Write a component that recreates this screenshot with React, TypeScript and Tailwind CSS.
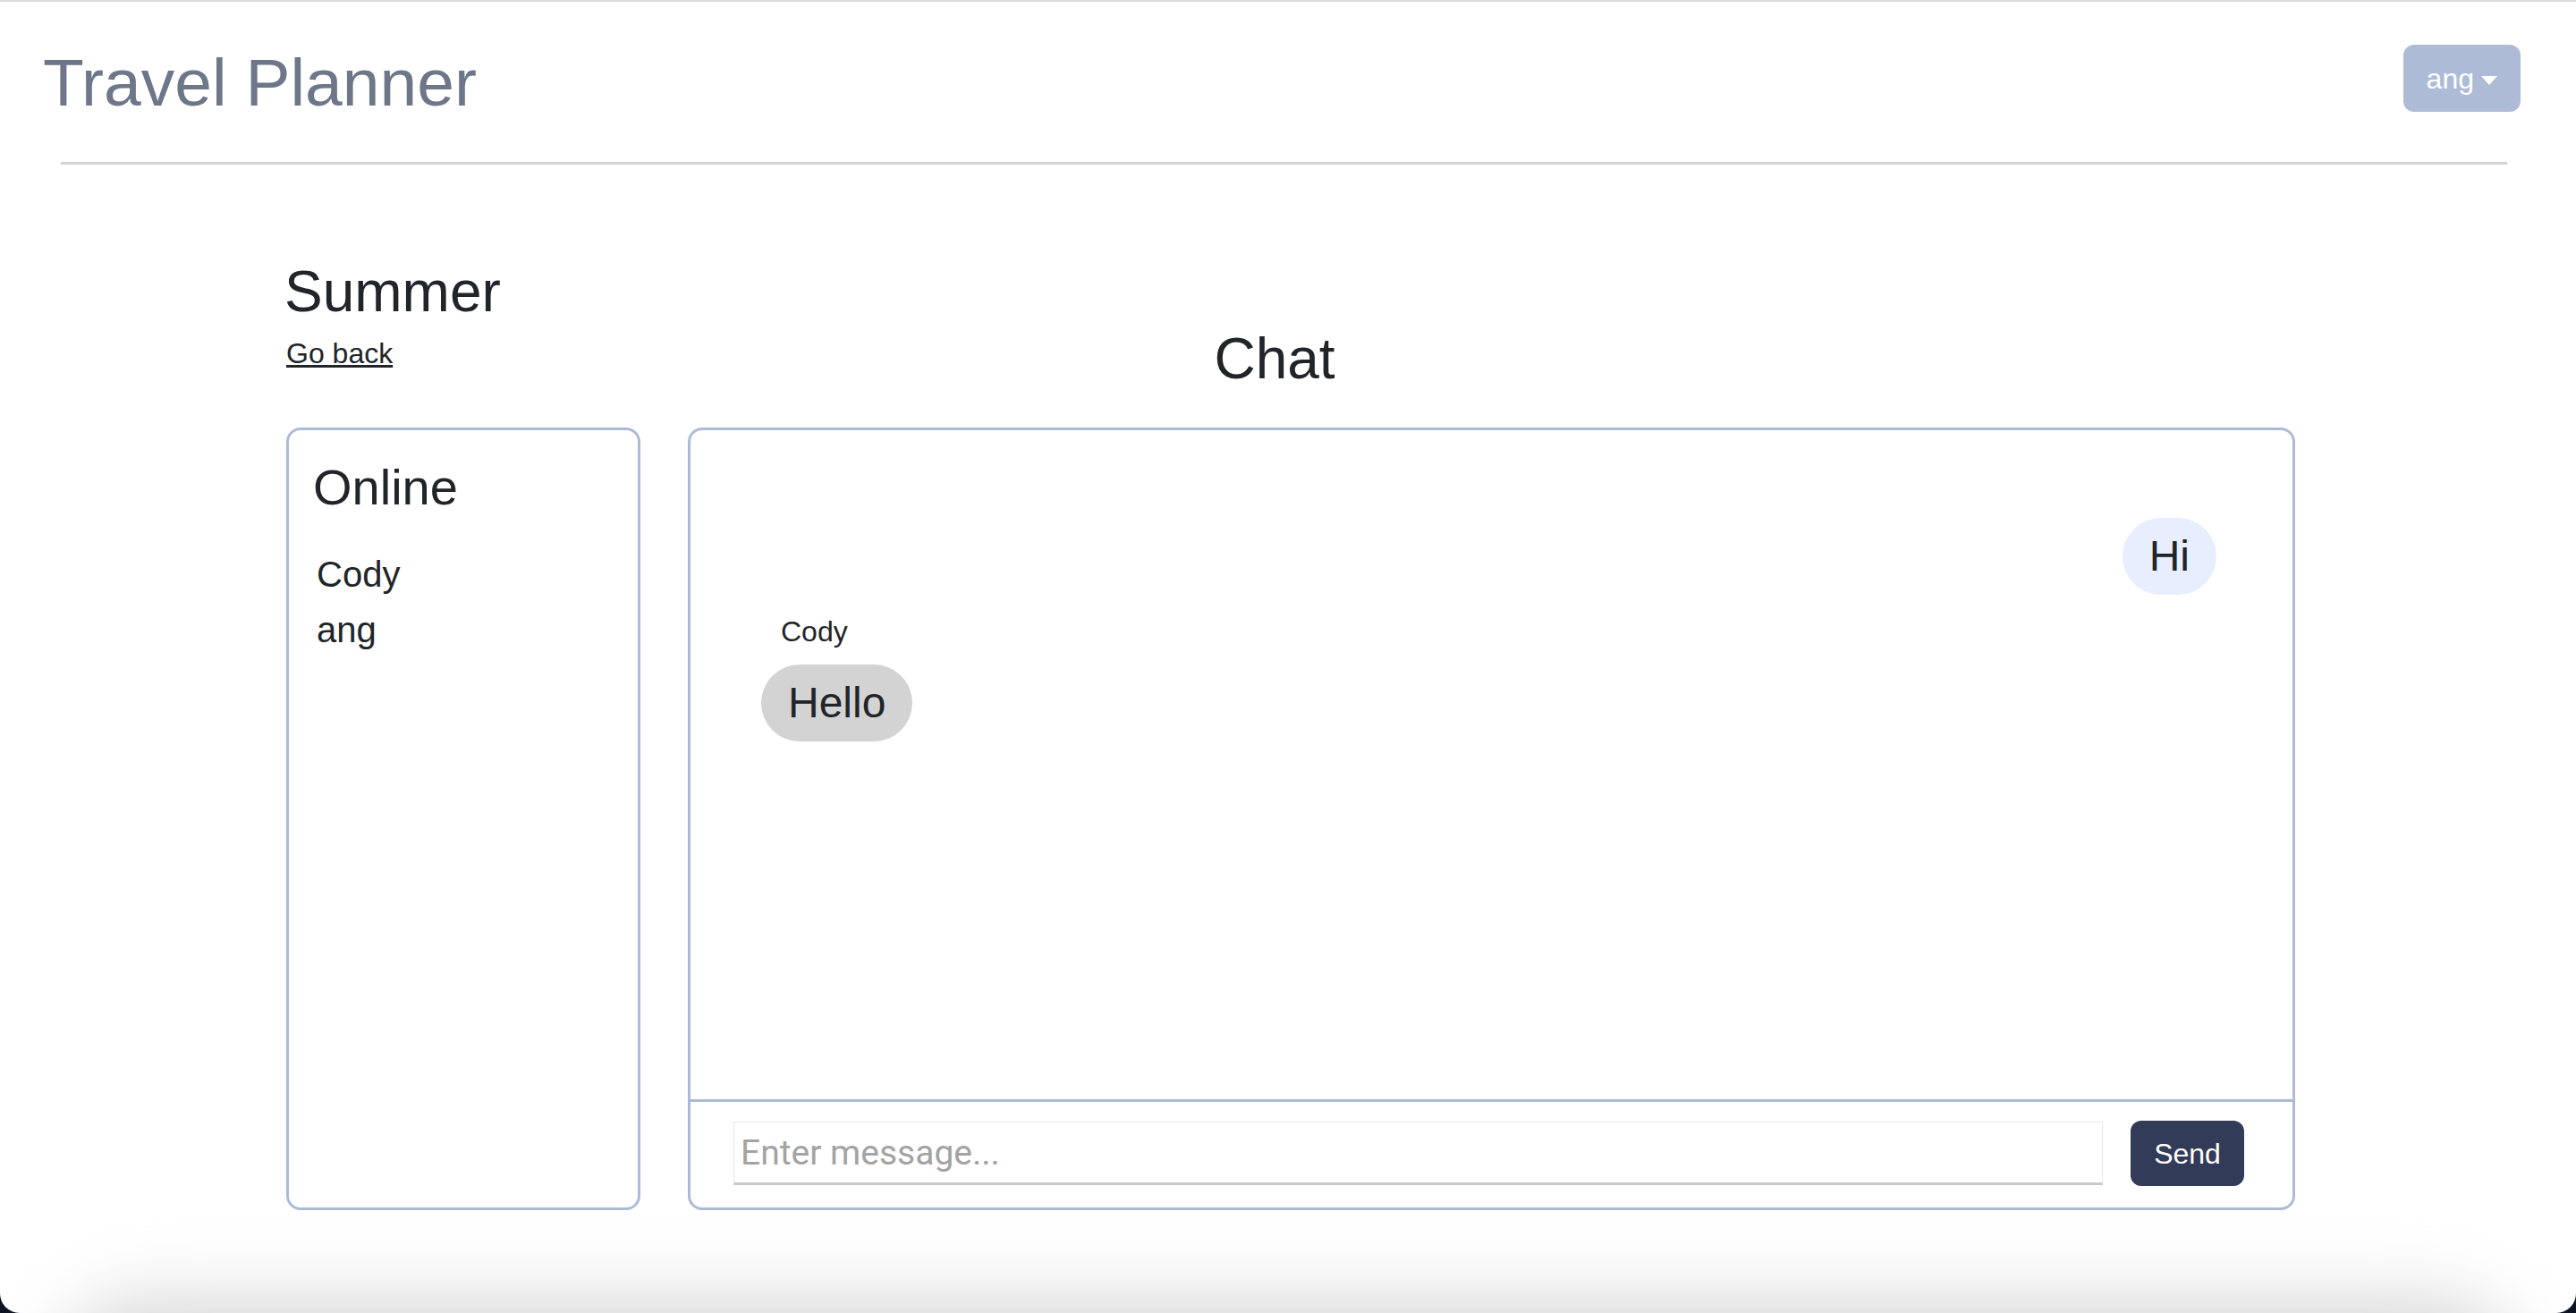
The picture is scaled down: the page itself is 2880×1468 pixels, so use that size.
import { useState } from 'react';

interface Message {
  id:     number;
  author: string;
  text:   string;
  mine:   boolean;
}

const online = ['Cody', 'ang'];

const messages: Message[] = [
  { id: 1, author: 'ang',  text: 'Hi',    mine: true  },
  { id: 2, author: 'Cody', text: 'Hello', mine: false },
];

function Navbar() {
  return (
    <div className="flex items-start justify-between pt-[48px] pl-[48px] pr-[62px]">
      <h1 className="-mt-[3px] mb-[5px] text-[75px] leading-[90px] text-[#6e7689]">Travel Planner</h1>
      <button className="flex h-[75px] items-center gap-[8px] rounded-[12px] bg-[#aebbd7] px-[26px] text-[32px] text-white">
        ang
        <span className="mt-[4px] h-0 w-0 border-x-[9px] border-t-[10px] border-x-transparent border-t-white" />
      </button>
    </div>
  );
}

function OnlineCard() {
  return (
    <div className="w-[396px] rounded-[16px] border-[3px] border-[#adbad7] pt-[30px] pl-[27px]">
      <h3 className="text-[56px] leading-[67px] text-[#212529]">Online</h3>
      <ul className="mt-[33px] pl-[4px]">
        {online.map(name => (
          <li key={name} className="text-[40px] leading-[62px] text-[#212529]">{name}</li>
        ))}
      </ul>
    </div>
  );
}

function ChatCard() {
  const [draft, setDraft] = useState('');

  return (
    <div className="flex flex-1 flex-col rounded-[16px] border-[3px] border-[#adbad7]">

      {/* Messages */}
      <div className="flex-1 pt-[98px]">
        {messages.map(m =>
          m.mine ? (
            <div key={m.id} className="flex justify-end pr-[85px]">
              <span className="rounded-[43px] bg-[#e8eefd] px-[30px] py-[7px] text-[48px] leading-[72px] text-[#212529]">
                {m.text}
              </span>
            </div>
          ) : (
            <div key={m.id} className="mt-[17px] pl-[79px]">
              <p className="pl-[22px] text-[32px] leading-[48px] text-[#212529]">{m.author}</p>
              <span className="mt-[13px] inline-block rounded-[43px] bg-[#d3d3d3] px-[30px] py-[7px] text-[48px] leading-[72px] text-[#212529]">
                {m.text}
              </span>
            </div>
          )
        )}
      </div>

      {/* Composer */}
      <div className="flex items-center gap-[31px] border-t-[3px] border-[#adbad7] pt-[21px] pb-[24px] pl-[48px] pr-[54px]">
        <input
          value={draft}
          onChange={e => setDraft(e.target.value)}
          placeholder="Enter message..."
          className="h-[71px] flex-1 border border-[#e6e6e6] border-b-[3px] border-b-[#c9c9c9] px-[7px] font-['Roboto',sans-serif] text-[39px] text-[#212529] outline-none placeholder:text-[#a3a3a3]"
        />
        <button className="h-[73px] w-[127px] rounded-[12px] bg-[#323b57] text-[32px] text-white">
          Send
        </button>
      </div>
    </div>
  );
}

export default function App() {
  return (
    <div className="h-[1468px] w-[2880px] bg-[#0e1522] font-['Liberation_Sans',Arial,sans-serif]">
      <div className="flex h-full flex-col overflow-hidden rounded-b-[22px] border-t-[2px] border-[#dadada] bg-white">

        <Navbar />
        <div className="mt-[39px] ml-[68px] mr-[77px] h-[3px] bg-[#d3d3d3]" />

        {/* Trip chat */}
        <div className="ml-[320px] w-[2246px] pt-[104px]">
          <div className="flex items-start">
            <div className="w-[396px]">
              <h2 className="-ml-[2px] text-[64px] leading-[77px] text-[#212529]">Summer</h2>
              <a href="#" className="mt-[6px] block text-[32px] leading-[48px] text-[#212529] underline">Go back</a>
            </div>
            <div className="flex-1 pr-[432px] text-center">
              <h2 className="mt-[75px] text-[64px] leading-[77px] text-[#212529]">Chat</h2>
            </div>
          </div>

          <div className="mt-[38px] flex h-[875px] gap-[53px]">
            <OnlineCard />
            <ChatCard />
          </div>
        </div>

        {/* window shadow */}
        <div className="relative flex-1 overflow-hidden">
          <div className="absolute left-[60px] right-[60px] top-[100px] h-[200px] rounded-[100px] bg-[#d6d6d6] blur-[40px]" />
        </div>
      </div>
    </div>
  );
}
